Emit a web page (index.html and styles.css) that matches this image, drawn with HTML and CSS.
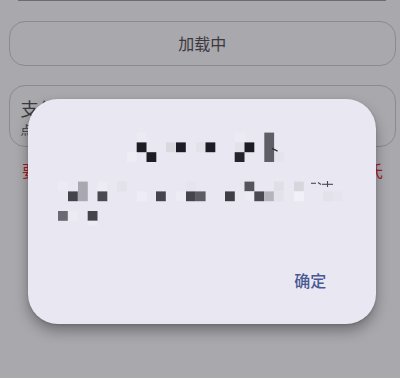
FILE: index.html
```html
<!DOCTYPE html>
<html lang="zh">
<head>
<meta charset="utf-8">
<link rel="stylesheet" href="styles.css">
</head>
<body>
<div class="page">
  <div class="prev-edge"></div>
  <div class="btn">加载中</div>
  <div class="card">
    <div class="card-title">支付宝支付</div>
    <div class="card-sub">点击进行支付</div>
  </div>
  <div class="warn"><span>要求支付</span><span>请稍后重试氏</span></div>
</div>

<div class="dialog">
  <svg class="mosaic" viewBox="28 129 348 100" width="348" height="100" aria-hidden="true">
    <!-- title -->
    <rect x="136.7" y="132.6" width="9.8" height="9.8" fill="#ecebf3"/>
    <rect x="235" y="132.6" width="9.8" height="9.8" fill="#ecebf3"/>
    <rect x="136.7" y="142.4" width="9.8" height="9.8" fill="#1d1c24"/>
    <rect x="166" y="142.4" width="9.8" height="9.8" fill="#d9d8df"/>
    <rect x="176" y="142.4" width="9.8" height="9.8" fill="#1d1c24"/>
    <rect x="196" y="142.4" width="9.8" height="9.8" fill="#e3e2ea"/>
    <rect x="205.5" y="142.4" width="9.8" height="9.8" fill="#1d1c24"/>
    <rect x="235" y="142.4" width="9.8" height="9.8" fill="#e3e2ea"/>
    <rect x="244.5" y="142.4" width="9.8" height="9.8" fill="#1d1c24"/>
    <rect x="127" y="152.2" width="9.8" height="9.8" fill="#eeedf5"/>
    <rect x="146.5" y="152.2" width="9.8" height="9.8" fill="#1d1c24"/>
    <rect x="234.7" y="152.2" width="9.8" height="9.8" fill="#25242c"/>
    <rect x="274" y="152.2" width="9.8" height="9.8" fill="#e5e4ec"/>
    <rect x="264.3" y="132.6" width="9.8" height="29.4" fill="#5f5e66"/>
    <line x1="272" y1="148.3" x2="277.6" y2="151.2" stroke="#2e2d35" stroke-width="1.3"/>
    <!-- body row 1 -->
    <rect x="58" y="181.6" width="9.8" height="9.8" fill="#ecebf3"/>
    <rect x="97.5" y="181.6" width="9.8" height="9.8" fill="#edecf4"/>
    <rect x="117" y="181.6" width="9.8" height="9.8" fill="#e3e2ea"/>
    <rect x="186" y="181.6" width="9.8" height="9.8" fill="#e6e5ed"/>
    <rect x="244.5" y="181.6" width="9.8" height="9.8" fill="#56555d"/>
    <rect x="274" y="181.6" width="9.8" height="9.8" fill="#e0dfe7"/>
    <rect x="294" y="181.6" width="9.8" height="9.8" fill="#d7d6dd"/>
    <rect x="78" y="181.6" width="9.8" height="19.6" fill="#a9a8b0"/>
    <!-- body row 2 -->
    <rect x="68" y="191.4" width="9.8" height="9.8" fill="#44434c"/>
    <rect x="97.5" y="191.4" width="9.8" height="9.8" fill="#4a4951"/>
    <rect x="137" y="191.4" width="9.8" height="9.8" fill="#eeedf5"/>
    <rect x="156" y="191.4" width="9.8" height="9.8" fill="#45444c"/>
    <rect x="176" y="191.4" width="9.8" height="9.8" fill="#edecf4"/>
    <rect x="186" y="191.4" width="9.8" height="9.8" fill="#45444d"/>
    <rect x="195.8" y="191.4" width="9.8" height="9.8" fill="#5d5c64"/>
    <rect x="225" y="191.4" width="9.8" height="9.8" fill="#3f3e47"/>
    <rect x="244.5" y="191.4" width="9.8" height="9.8" fill="#ecebf3"/>
    <rect x="254.3" y="191.4" width="9.8" height="9.8" fill="#4a4951"/>
    <rect x="264.1" y="191.4" width="9.8" height="9.8" fill="#b5b4bc"/>
    <rect x="273.9" y="191.4" width="9.8" height="9.8" fill="#e3e2ea"/>
    <rect x="294" y="191.4" width="9.8" height="9.8" fill="#f1f0f8"/>
    <rect x="323" y="191.4" width="9.8" height="9.8" fill="#e3e2ea"/>
    <rect x="332.8" y="191.4" width="9.8" height="9.8" fill="#e6e5ed"/>
    <!-- body row 3 -->
    <rect x="58" y="211" width="9.8" height="9.8" fill="#6b6a72"/>
    <rect x="68" y="211" width="9.8" height="9.8" fill="#ecebf3"/>
    <rect x="87.7" y="211" width="9.8" height="9.8" fill="#44434b"/>
    <rect x="87.7" y="220.8" width="9.8" height="5" fill="#edecf4"/>
    <!-- small glyph strokes -->
    <line x1="311" y1="183.3" x2="316" y2="183.3" stroke="#4a4951" stroke-width="1.1"/>
    <line x1="318" y1="182.5" x2="321" y2="184.5" stroke="#4a4951" stroke-width="1.1"/>
    <line x1="322" y1="184.3" x2="333" y2="184.3" stroke="#4a4951" stroke-width="1.1"/>
    <line x1="327.5" y1="181" x2="327.5" y2="187" stroke="#4a4951" stroke-width="1.1"/>
  </svg>
  <div class="actions"><span class="ok">确定</span></div>
</div>
</body>
</html>
```
FILE: styles.css
```css
html, body {
  margin: 0;
  padding: 0;
}
body {
  width: 400px;
  height: 378px;
  overflow: hidden;
  background: #a9a8ad;
  font-family: "Noto Sans CJK SC", "Noto Sans", sans-serif;
  color: #3b3a40;
  position: relative;
}
.page {
  display: flex;
  flex-direction: column;
}
.prev-edge {
  height: 1px;
  margin: 0 14px 0 18px;
  background: #6d6c71;
}
.btn {
  margin: 19.5px 4px 0 8.5px;
  height: 43px;
  border: 1px solid #8b8a8f;
  border-radius: 16px;
  display: flex;
  align-items: center;
  justify-content: center;
  font-size: 16px;
  color: #3b3a40;
}
.card {
  margin: 19.5px 4px 0 8.5px;
  border: 1px solid #8b8a8f;
  border-radius: 16px;
  padding: 11px 11px 0;
  box-sizing: border-box;
  height: 62px;
}
.card-title {
  font-size: 18px;
  line-height: 22px;
}
.card-sub {
  font-size: 12px;
  line-height: 16px;
  margin-top: 3px;
}
.warn {
  display: flex;
  justify-content: space-between;
  margin: 12px 17px 0 22px;
  font-size: 16px;
  line-height: 22px;
  color: #a81c22;
}
.dialog {
  position: absolute;
  left: 28.3px;
  top: 99px;
  width: 348px;
  height: 225px;
  border-radius: 30px;
  background: #e9e7f1;
  box-shadow: 0 7px 14px rgba(0, 0, 0, 0.32), 0 1px 3px rgba(0, 0, 0, 0.15);
  display: flex;
  flex-direction: column;
}
.mosaic {
  display: block;
  margin-top: 30px;
}
.actions {
  margin-top: auto;
  display: flex;
  justify-content: flex-end;
  padding: 0 50px 34.5px 0;
}
.ok {
  font-size: 16px;
  line-height: 20px;
  font-weight: 500;
  color: #4a5994;
}
```
